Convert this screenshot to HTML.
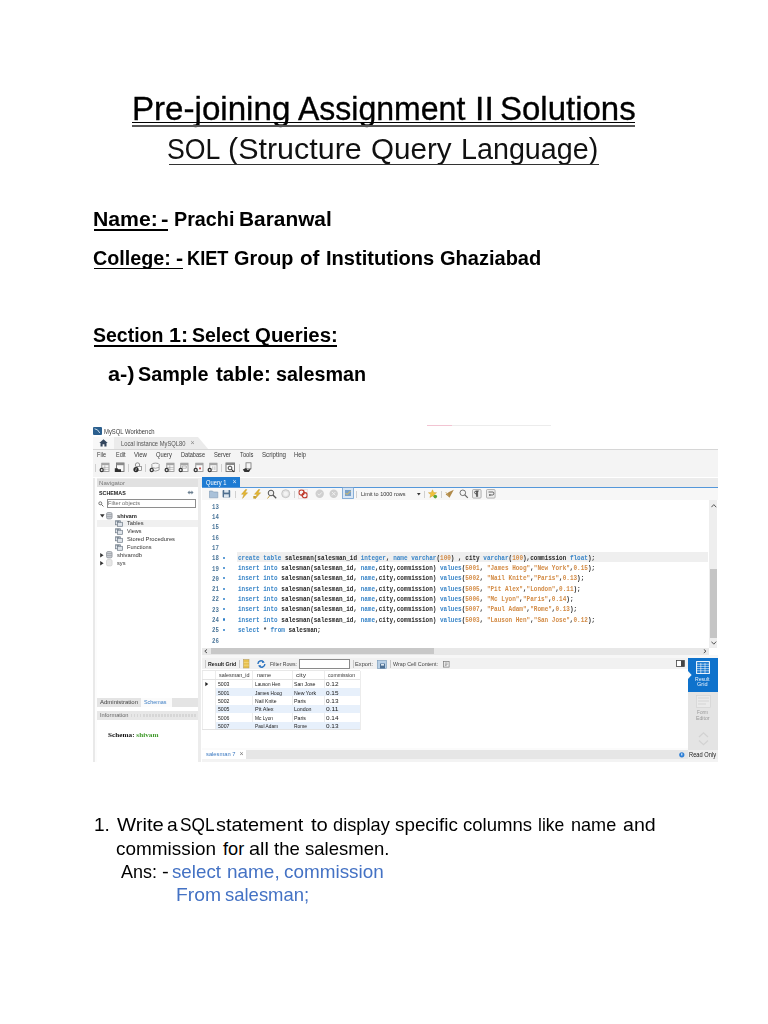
<!DOCTYPE html>
<html><head><meta charset="utf-8"><title>Pre-joining Assignment II Solutions</title>
<style>
html,body{margin:0;padding:0;background:#fff;}
body{width:768px;height:1024px;position:relative;overflow:hidden;font-family:"Liberation Sans",sans-serif;}
.k{color:#3a86c8;}
.o{color:#d38b45;}
</style></head><body>
<div style="position:absolute;left:131.96px;top:92.60px;font-family:'Liberation Sans',sans-serif;font-size:32.70px;font-weight:normal;color:#000;line-height:1;white-space:nowrap;transform-origin:0 0;transform:scaleX(1.0132);-webkit-text-stroke:0.35px #000;">Pre-joining</div>
<div style="position:absolute;left:298.40px;top:92.60px;font-family:'Liberation Sans',sans-serif;font-size:32.70px;font-weight:normal;color:#000;line-height:1;white-space:nowrap;transform-origin:0 0;transform:scaleX(0.9795);-webkit-text-stroke:0.35px #000;">Assignment</div>
<div style="position:absolute;left:475.10px;top:92.60px;font-family:'Liberation Sans',sans-serif;font-size:32.70px;font-weight:normal;color:#000;line-height:1;white-space:nowrap;transform-origin:0 0;transform:scaleX(1.0333);-webkit-text-stroke:0.35px #000;">II</div>
<div style="position:absolute;left:499.68px;top:92.60px;font-family:'Liberation Sans',sans-serif;font-size:32.70px;font-weight:normal;color:#000;line-height:1;white-space:nowrap;transform-origin:0 0;transform:scaleX(1.0092);-webkit-text-stroke:0.35px #000;">Solutions</div>
<div style="position:absolute;left:132.20px;top:121.80px;width:502.60px;height:1.20px;background:#000;"></div>
<div style="position:absolute;left:132.20px;top:124.90px;width:502.60px;height:2.00px;background:#555;"></div>
<div style="position:absolute;left:167.09px;top:133.80px;font-family:'Liberation Sans',sans-serif;font-size:29.50px;font-weight:normal;color:#111;line-height:1;white-space:nowrap;transform-origin:0 0;transform:scaleX(0.9036);">SOL</div>
<div style="position:absolute;left:228.13px;top:133.80px;font-family:'Liberation Sans',sans-serif;font-size:29.50px;font-weight:normal;color:#111;line-height:1;white-space:nowrap;transform-origin:0 0;transform:scaleX(1.0325);">(Structure</div>
<div style="position:absolute;left:371.20px;top:133.80px;font-family:'Liberation Sans',sans-serif;font-size:29.50px;font-weight:normal;color:#111;line-height:1;white-space:nowrap;transform-origin:0 0;transform:scaleX(1.0038);">Query</div>
<div style="position:absolute;left:461.45px;top:133.80px;font-family:'Liberation Sans',sans-serif;font-size:29.50px;font-weight:normal;color:#111;line-height:1;white-space:nowrap;transform-origin:0 0;transform:scaleX(0.9730);">Language)</div>
<div style="position:absolute;left:168.60px;top:163.50px;width:430.90px;height:1.30px;background:#333;"></div>
<div style="position:absolute;left:92.64px;top:209.00px;font-family:'Liberation Sans',sans-serif;font-size:20.00px;font-weight:bold;color:#000;line-height:1;white-space:nowrap;transform-origin:0 0;transform:scaleX(1.0603);">Name:</div>
<div style="position:absolute;left:161.37px;top:209.00px;font-family:'Liberation Sans',sans-serif;font-size:20.00px;font-weight:bold;color:#000;line-height:1;white-space:nowrap;transform-origin:0 0;transform:scaleX(1.1231);">-</div>
<div style="position:absolute;left:173.61px;top:209.00px;font-family:'Liberation Sans',sans-serif;font-size:20.00px;font-weight:bold;color:#000;line-height:1;white-space:nowrap;transform-origin:0 0;transform:scaleX(0.9881);">Prachi</div>
<div style="position:absolute;left:238.56px;top:209.00px;font-family:'Liberation Sans',sans-serif;font-size:20.00px;font-weight:bold;color:#000;line-height:1;white-space:nowrap;transform-origin:0 0;transform:scaleX(1.0430);">Baranwal</div>
<div style="position:absolute;left:93.50px;top:229.40px;width:74.50px;height:1.60px;background:#000;"></div>
<div style="position:absolute;left:92.71px;top:248.00px;font-family:'Liberation Sans',sans-serif;font-size:20.00px;font-weight:bold;color:#000;line-height:1;white-space:nowrap;transform-origin:0 0;transform:scaleX(0.9868);">College:</div>
<div style="position:absolute;left:175.51px;top:248.00px;font-family:'Liberation Sans',sans-serif;font-size:20.00px;font-weight:bold;color:#000;line-height:1;white-space:nowrap;transform-origin:0 0;transform:scaleX(1.0683);">-</div>
<div style="position:absolute;left:187.32px;top:248.00px;font-family:'Liberation Sans',sans-serif;font-size:20.00px;font-weight:bold;color:#000;line-height:1;white-space:nowrap;transform-origin:0 0;transform:scaleX(0.9100);">KIET</div>
<div style="position:absolute;left:234.41px;top:248.00px;font-family:'Liberation Sans',sans-serif;font-size:20.00px;font-weight:bold;color:#000;line-height:1;white-space:nowrap;transform-origin:0 0;transform:scaleX(0.9914);">Group</div>
<div style="position:absolute;left:299.57px;top:248.00px;font-family:'Liberation Sans',sans-serif;font-size:20.00px;font-weight:bold;color:#000;line-height:1;white-space:nowrap;transform-origin:0 0;transform:scaleX(1.0333);">of</div>
<div style="position:absolute;left:325.80px;top:248.00px;font-family:'Liberation Sans',sans-serif;font-size:20.00px;font-weight:bold;color:#000;line-height:1;white-space:nowrap;transform-origin:0 0;transform:scaleX(1.0038);">Institutions</div>
<div style="position:absolute;left:439.90px;top:248.00px;font-family:'Liberation Sans',sans-serif;font-size:20.00px;font-weight:bold;color:#000;line-height:1;white-space:nowrap;transform-origin:0 0;transform:scaleX(1.0010);">Ghaziabad</div>
<div style="position:absolute;left:93.50px;top:267.80px;width:89.00px;height:1.60px;background:#000;"></div>
<div style="position:absolute;left:92.73px;top:325.30px;font-family:'Liberation Sans',sans-serif;font-size:20.00px;font-weight:bold;color:#000;line-height:1;white-space:nowrap;transform-origin:0 0;transform:scaleX(0.9743);">Section</div>
<div style="position:absolute;left:169.33px;top:325.30px;font-family:'Liberation Sans',sans-serif;font-size:20.00px;font-weight:bold;color:#000;line-height:1;white-space:nowrap;transform-origin:0 0;transform:scaleX(1.0733);">1:</div>
<div style="position:absolute;left:192.22px;top:325.30px;font-family:'Liberation Sans',sans-serif;font-size:20.00px;font-weight:bold;color:#000;line-height:1;white-space:nowrap;transform-origin:0 0;transform:scaleX(0.9759);">Select</div>
<div style="position:absolute;left:255.48px;top:325.30px;font-family:'Liberation Sans',sans-serif;font-size:20.00px;font-weight:bold;color:#000;line-height:1;white-space:nowrap;transform-origin:0 0;transform:scaleX(1.0205);">Queries:</div>
<div style="position:absolute;left:93.50px;top:345.20px;width:243.20px;height:1.80px;background:#000;"></div>
<div style="position:absolute;left:107.69px;top:363.50px;font-family:'Liberation Sans',sans-serif;font-size:20.00px;font-weight:bold;color:#000;line-height:1;white-space:nowrap;transform-origin:0 0;transform:scaleX(1.0884);">a-)</div>
<div style="position:absolute;left:138.21px;top:363.50px;font-family:'Liberation Sans',sans-serif;font-size:20.00px;font-weight:bold;color:#000;line-height:1;white-space:nowrap;transform-origin:0 0;transform:scaleX(0.9899);">Sample</div>
<div style="position:absolute;left:215.70px;top:363.50px;font-family:'Liberation Sans',sans-serif;font-size:20.00px;font-weight:bold;color:#000;line-height:1;white-space:nowrap;transform-origin:0 0;transform:scaleX(1.0288);">table:</div>
<div style="position:absolute;left:276.41px;top:363.50px;font-family:'Liberation Sans',sans-serif;font-size:20.00px;font-weight:bold;color:#000;line-height:1;white-space:nowrap;transform-origin:0 0;transform:scaleX(0.9876);">salesman</div>
<div style="position:absolute;left:93.55px;top:816.00px;font-family:'Liberation Sans',sans-serif;font-size:18.20px;font-weight:normal;color:#000;line-height:1;white-space:nowrap;transform-origin:0 0;transform:scaleX(1.0500);">1.</div>
<div style="position:absolute;left:117.30px;top:816.00px;font-family:'Liberation Sans',sans-serif;font-size:18.20px;font-weight:normal;color:#000;line-height:1;white-space:nowrap;transform-origin:0 0;transform:scaleX(1.1122);">Write</div>
<div style="position:absolute;left:167.24px;top:816.00px;font-family:'Liberation Sans',sans-serif;font-size:18.20px;font-weight:normal;color:#000;line-height:1;white-space:nowrap;transform-origin:0 0;transform:scaleX(1.0556);">a</div>
<div style="position:absolute;left:179.97px;top:816.00px;font-family:'Liberation Sans',sans-serif;font-size:18.20px;font-weight:normal;color:#000;line-height:1;white-space:nowrap;transform-origin:0 0;transform:scaleX(0.9478);">SQL</div>
<div style="position:absolute;left:216.41px;top:816.00px;font-family:'Liberation Sans',sans-serif;font-size:18.20px;font-weight:normal;color:#000;line-height:1;white-space:nowrap;transform-origin:0 0;transform:scaleX(1.0924);">statement</div>
<div style="position:absolute;left:310.61px;top:816.00px;font-family:'Liberation Sans',sans-serif;font-size:18.20px;font-weight:normal;color:#000;line-height:1;white-space:nowrap;transform-origin:0 0;transform:scaleX(1.1127);">to</div>
<div style="position:absolute;left:332.90px;top:816.00px;font-family:'Liberation Sans',sans-serif;font-size:18.20px;font-weight:normal;color:#000;line-height:1;white-space:nowrap;transform-origin:0 0;transform:scaleX(1.0036);">display</div>
<div style="position:absolute;left:395.36px;top:816.00px;font-family:'Liberation Sans',sans-serif;font-size:18.20px;font-weight:normal;color:#000;line-height:1;white-space:nowrap;transform-origin:0 0;transform:scaleX(1.0356);">specific</div>
<div style="position:absolute;left:462.88px;top:816.00px;font-family:'Liberation Sans',sans-serif;font-size:18.20px;font-weight:normal;color:#000;line-height:1;white-space:nowrap;transform-origin:0 0;transform:scaleX(1.0205);">columns</div>
<div style="position:absolute;left:537.54px;top:816.00px;font-family:'Liberation Sans',sans-serif;font-size:18.20px;font-weight:normal;color:#000;line-height:1;white-space:nowrap;transform-origin:0 0;transform:scaleX(0.9615);">like</div>
<div style="position:absolute;left:570.91px;top:816.00px;font-family:'Liberation Sans',sans-serif;font-size:18.20px;font-weight:normal;color:#000;line-height:1;white-space:nowrap;transform-origin:0 0;transform:scaleX(0.9932);">name</div>
<div style="position:absolute;left:622.92px;top:816.00px;font-family:'Liberation Sans',sans-serif;font-size:18.20px;font-weight:normal;color:#000;line-height:1;white-space:nowrap;transform-origin:0 0;transform:scaleX(1.0786);">and</div>
<div style="position:absolute;left:115.86px;top:839.70px;font-family:'Liberation Sans',sans-serif;font-size:18.20px;font-weight:normal;color:#000;line-height:1;white-space:nowrap;transform-origin:0 0;transform:scaleX(1.0415);">commission</div>
<div style="position:absolute;left:223.00px;top:839.70px;font-family:'Liberation Sans',sans-serif;font-size:18.20px;font-weight:normal;color:#000;line-height:1;white-space:nowrap;transform-origin:0 0;transform:scaleX(1.0000);">for</div>
<div style="position:absolute;left:248.71px;top:839.70px;font-family:'Liberation Sans',sans-serif;font-size:18.20px;font-weight:normal;color:#000;line-height:1;white-space:nowrap;transform-origin:0 0;transform:scaleX(1.0938);">all</div>
<div style="position:absolute;left:274.20px;top:839.70px;font-family:'Liberation Sans',sans-serif;font-size:18.20px;font-weight:normal;color:#000;line-height:1;white-space:nowrap;transform-origin:0 0;transform:scaleX(1.0160);">the</div>
<div style="position:absolute;left:305.38px;top:839.70px;font-family:'Liberation Sans',sans-serif;font-size:18.20px;font-weight:normal;color:#000;line-height:1;white-space:nowrap;transform-origin:0 0;transform:scaleX(1.0188);">salesmen.</div>
<div style="position:absolute;left:121.40px;top:863.20px;font-family:'Liberation Sans',sans-serif;font-size:18.20px;font-weight:normal;color:#000;line-height:1;white-space:nowrap;transform-origin:0 0;transform:scaleX(0.9886);">Ans:</div>
<div style="position:absolute;left:162.00px;top:863.20px;font-family:'Liberation Sans',sans-serif;font-size:18.20px;font-weight:normal;color:#000;line-height:1;white-space:nowrap;transform-origin:0 0;transform:scaleX(1.1171);">-</div>
<div style="position:absolute;left:172.37px;top:863.20px;font-family:'Liberation Sans',sans-serif;font-size:18.20px;font-weight:normal;color:#4472c4;line-height:1;white-space:nowrap;transform-origin:0 0;transform:scaleX(1.0304);">select</div>
<div style="position:absolute;left:226.76px;top:863.20px;font-family:'Liberation Sans',sans-serif;font-size:18.20px;font-weight:normal;color:#4472c4;line-height:1;white-space:nowrap;transform-origin:0 0;transform:scaleX(1.0417);">name,</div>
<div style="position:absolute;left:283.96px;top:863.20px;font-family:'Liberation Sans',sans-serif;font-size:18.20px;font-weight:normal;color:#4472c4;line-height:1;white-space:nowrap;transform-origin:0 0;transform:scaleX(1.0394);">commission</div>
<div style="position:absolute;left:175.68px;top:886.20px;font-family:'Liberation Sans',sans-serif;font-size:18.20px;font-weight:normal;color:#4472c4;line-height:1;white-space:nowrap;transform-origin:0 0;transform:scaleX(1.0615);">From</div>
<div style="position:absolute;left:225.23px;top:886.20px;font-family:'Liberation Sans',sans-serif;font-size:18.20px;font-weight:normal;color:#4472c4;line-height:1;white-space:nowrap;transform-origin:0 0;transform:scaleX(1.0156);">salesman;</div>
<div style="position:absolute;left:0;top:0;width:768px;height:1024px;filter:blur(0.25px);">
<div style="position:absolute;left:93.00px;top:423.00px;width:625.00px;height:339.00px;background:#ffffff;"></div>
<div style="position:absolute;left:93.30px;top:427.30px;width:8.40px;height:7.30px;background:#2b5f8e;border-radius:1px;"></div>
<svg style="position:absolute;left:93.30px;top:427.30px;" width="8.4" height="7.3" viewBox="0 0 8.4 7.3"><path d="M1.6 1.8 Q5 2 6.8 6" stroke="#d5e5f3" stroke-width="0.9" fill="none"/></svg>
<div style="position:absolute;left:104.00px;top:428.65px;font-family:'Liberation Sans',sans-serif;font-size:6.80px;font-weight:normal;color:#3c3c3c;line-height:1;white-space:nowrap;transform-origin:0 0;transform:scaleX(0.8640);">MySQL Workbench</div>
<div style="position:absolute;left:427.00px;top:425.20px;width:25.00px;height:0.80px;background:#f2c4d2;"></div>
<div style="position:absolute;left:452.00px;top:425.20px;width:99.00px;height:0.80px;background:#ececec;"></div>
<div style="position:absolute;left:93.00px;top:437.00px;width:21.00px;height:12.50px;background:#f8f8f8;"></div>
<svg style="position:absolute;left:99.00px;top:439.30px;" width="9" height="8" viewBox="0 0 9 8"><path d="M0.3 4 L4.5 0.3 L8.7 4 L7.5 4 L7.5 7.6 L5.4 7.6 L5.4 5.3 L3.6 5.3 L3.6 7.6 L1.5 7.6 L1.5 4 Z" fill="#34475e"/></svg>
<svg style="position:absolute;left:114.00px;top:437.00px;" width="96" height="13" viewBox="0 0 96 13"><path d="M0 0 L84 0 L94.5 12.5 L0 12.5 Z" fill="#ebebeb"/></svg>
<div style="position:absolute;left:120.80px;top:440.66px;font-family:'Liberation Sans',sans-serif;font-size:6.40px;font-weight:normal;color:#555;line-height:1;white-space:nowrap;transform-origin:0 0;transform:scaleX(0.9079);">Local instance MySQL80</div>
<div style="position:absolute;left:190.50px;top:439.26px;font-family:'Liberation Sans',sans-serif;font-size:7.00px;font-weight:normal;color:#888;line-height:1;white-space:nowrap;transform-origin:0 0;">×</div>
<div style="position:absolute;left:93.00px;top:449.30px;width:625.00px;height:0.80px;background:#d6d6d6;"></div>
<div style="position:absolute;left:93.00px;top:450.10px;width:625.00px;height:27.40px;background:#f4f4f4;"></div>
<div style="position:absolute;left:97.00px;top:452.26px;font-family:'Liberation Sans',sans-serif;font-size:6.40px;font-weight:normal;color:#3a3a3a;line-height:1;white-space:nowrap;transform-origin:0 0;transform:scaleX(0.8727);">File</div>
<div style="position:absolute;left:115.50px;top:452.26px;font-family:'Liberation Sans',sans-serif;font-size:6.40px;font-weight:normal;color:#3a3a3a;line-height:1;white-space:nowrap;transform-origin:0 0;transform:scaleX(0.8624);">Edit</div>
<div style="position:absolute;left:134.00px;top:452.26px;font-family:'Liberation Sans',sans-serif;font-size:6.40px;font-weight:normal;color:#3a3a3a;line-height:1;white-space:nowrap;transform-origin:0 0;transform:scaleX(0.9455);">View</div>
<div style="position:absolute;left:155.70px;top:452.26px;font-family:'Liberation Sans',sans-serif;font-size:6.40px;font-weight:normal;color:#3a3a3a;line-height:1;white-space:nowrap;transform-origin:0 0;transform:scaleX(0.9077);">Query</div>
<div style="position:absolute;left:180.50px;top:452.26px;font-family:'Liberation Sans',sans-serif;font-size:6.40px;font-weight:normal;color:#3a3a3a;line-height:1;white-space:nowrap;transform-origin:0 0;transform:scaleX(0.8772);">Database</div>
<div style="position:absolute;left:213.50px;top:452.26px;font-family:'Liberation Sans',sans-serif;font-size:6.40px;font-weight:normal;color:#3a3a3a;line-height:1;white-space:nowrap;transform-origin:0 0;transform:scaleX(0.9029);">Server</div>
<div style="position:absolute;left:240.00px;top:452.26px;font-family:'Liberation Sans',sans-serif;font-size:6.40px;font-weight:normal;color:#3a3a3a;line-height:1;white-space:nowrap;transform-origin:0 0;transform:scaleX(0.9047);">Tools</div>
<div style="position:absolute;left:262.00px;top:452.26px;font-family:'Liberation Sans',sans-serif;font-size:6.40px;font-weight:normal;color:#3a3a3a;line-height:1;white-space:nowrap;transform-origin:0 0;transform:scaleX(0.9648);">Scripting</div>
<div style="position:absolute;left:294.00px;top:452.26px;font-family:'Liberation Sans',sans-serif;font-size:6.40px;font-weight:normal;color:#3a3a3a;line-height:1;white-space:nowrap;transform-origin:0 0;transform:scaleX(0.9121);">Help</div>
<svg style="position:absolute;left:99.30px;top:462.20px;" width="11" height="11" viewBox="0 0 11 11"><rect x="2.8" y="1.2" width="7.2" height="8.2" fill="#fbfbfb" stroke="#8c8c8c" stroke-width="0.8"/><rect x="2.8" y="1.2" width="7.2" height="2" fill="#a5a5a5"/><path d="M5.8 3.4 V9.2 M3 5.4 H9.8 M3 7.3 H9.8" stroke="#9a9a9a" stroke-width="0.6"/><circle cx="2.7" cy="8" r="2.2" fill="#3a3a3a"/><circle cx="2.7" cy="8" r="0.9" fill="#eeeeee"/></svg>
<svg style="position:absolute;left:113.80px;top:462.20px;" width="11" height="11" viewBox="0 0 11 11"><rect x="2.5" y="1" width="7.5" height="8.5" fill="#fafafa" stroke="#6a6a6a" stroke-width="0.9"/><rect x="2.5" y="1" width="7.5" height="2.2" fill="#8a8a8a"/><path d="M0.8 6.3 H3.5 L4.3 7.2 H7 V10 H0.8 Z" fill="#2f2f2f"/></svg>
<div style="position:absolute;left:128.30px;top:463.50px;width:0.60px;height:8.00px;background:#cfcfcf;"></div>
<div style="position:absolute;left:94.80px;top:463.50px;width:0.60px;height:8.00px;background:#cfcfcf;"></div>
<svg style="position:absolute;left:131.80px;top:462.20px;" width="11" height="11" viewBox="0 0 11 11"><circle cx="5.5" cy="3" r="2.2" fill="#f4f4f4" stroke="#777" stroke-width="0.8"/><rect x="5" y="4.5" width="4.5" height="4" fill="#fafafa" stroke="#777" stroke-width="0.7"/><circle cx="4" cy="7.6" r="2.6" fill="#2a2a2a"/><path d="M4.3 6 L3.6 9" stroke="#eee" stroke-width="0.7"/></svg>
<div style="position:absolute;left:145.10px;top:463.50px;width:0.60px;height:8.00px;background:#cfcfcf;"></div>
<svg style="position:absolute;left:148.60px;top:462.20px;" width="11" height="11" viewBox="0 0 11 11"><ellipse cx="6.5" cy="2.6" rx="3.6" ry="1.5" fill="#f6f6f6" stroke="#8c8c8c" stroke-width="0.8"/><path d="M2.9 2.6 V8 Q6.5 10.2 10.1 8 V2.6" fill="#f6f6f6" stroke="#8c8c8c" stroke-width="0.8"/><path d="M2.9 5.3 Q6.5 7.3 10.1 5.3" stroke="#8c8c8c" stroke-width="0.7" fill="none"/><circle cx="2.7" cy="8" r="2.2" fill="#3a3a3a"/><circle cx="2.7" cy="8" r="0.9" fill="#eeeeee"/></svg>
<svg style="position:absolute;left:163.50px;top:462.20px;" width="11" height="11" viewBox="0 0 11 11"><rect x="2.8" y="1.2" width="7.2" height="8.2" fill="#fbfbfb" stroke="#8c8c8c" stroke-width="0.8"/><rect x="2.8" y="1.2" width="7.2" height="2" fill="#a5a5a5"/><path d="M5.8 3.4 V9.2 M3 5.4 H9.8 M3 7.3 H9.8" stroke="#9a9a9a" stroke-width="0.6"/><circle cx="2.7" cy="8" r="2.2" fill="#3a3a3a"/><circle cx="2.7" cy="8" r="0.9" fill="#eeeeee"/></svg>
<svg style="position:absolute;left:178.20px;top:462.20px;" width="11" height="11" viewBox="0 0 11 11"><rect x="2.8" y="1.2" width="7.2" height="8.2" fill="#fbfbfb" stroke="#8c8c8c" stroke-width="0.8"/><rect x="2.8" y="1.2" width="7.2" height="2" fill="#a5a5a5"/><path d="M4.3 4 H8.3 V6.2 H4.3 Z" fill="none" stroke="#8a8a8a" stroke-width="0.6"/><circle cx="2.7" cy="8" r="2.2" fill="#3a3a3a"/><circle cx="2.7" cy="8" r="0.9" fill="#eeeeee"/></svg>
<svg style="position:absolute;left:192.50px;top:462.20px;" width="11" height="11" viewBox="0 0 11 11"><rect x="2.8" y="1.2" width="7.2" height="8.2" fill="#fbfbfb" stroke="#8c8c8c" stroke-width="0.8"/><rect x="2.8" y="1.2" width="7.2" height="2" fill="#a5a5a5"/><rect x="6" y="5.5" width="2" height="1.8" fill="#b55"/><circle cx="2.7" cy="8" r="2.2" fill="#3a3a3a"/><circle cx="2.7" cy="8" r="0.9" fill="#eeeeee"/></svg>
<svg style="position:absolute;left:207.00px;top:462.20px;" width="11" height="11" viewBox="0 0 11 11"><rect x="2.8" y="1.2" width="7.2" height="8.2" fill="#fbfbfb" stroke="#8c8c8c" stroke-width="0.8"/><rect x="2.8" y="1.2" width="7.2" height="2" fill="#a5a5a5"/><path d="M5.8 4.3 V8 M7.9 4.3 V8" stroke="#999" stroke-width="0.6"/><circle cx="2.7" cy="8" r="2.2" fill="#3a3a3a"/><circle cx="2.7" cy="8" r="0.9" fill="#eeeeee"/></svg>
<div style="position:absolute;left:221.30px;top:463.50px;width:0.60px;height:8.00px;background:#cfcfcf;"></div>
<svg style="position:absolute;left:225.00px;top:462.20px;" width="11" height="11" viewBox="0 0 11 11"><rect x="1" y="1" width="8.5" height="8.5" fill="#fafafa" stroke="#6a6a6a" stroke-width="0.9"/><rect x="1" y="1" width="8.5" height="2" fill="#8a8a8a"/><circle cx="5" cy="6" r="1.9" fill="none" stroke="#333" stroke-width="0.9"/><path d="M6.4 7.4 L9 9.8" stroke="#333" stroke-width="1.1"/></svg>
<div style="position:absolute;left:238.50px;top:463.50px;width:0.60px;height:8.00px;background:#cfcfcf;"></div>
<svg style="position:absolute;left:242.00px;top:462.20px;" width="11" height="11" viewBox="0 0 11 11"><rect x="4" y="0.8" width="5" height="6" fill="#f4f4f4" stroke="#777" stroke-width="0.8"/><path d="M0.8 7.5 L4 6 L5.5 8 L9 6.5 L7 10 L2.5 10 Z" fill="#333"/></svg>
<div style="position:absolute;left:93.00px;top:477.50px;width:625.00px;height:9.50px;background:#ececec;"></div>
<div style="position:absolute;left:93.00px;top:477.50px;width:3.60px;height:284.50px;background:#fcfcfc;"></div>
<div style="position:absolute;left:93.00px;top:477.50px;width:2.20px;height:284.50px;background:#e9e9e9;"></div>
<div style="position:absolute;left:96.60px;top:479.40px;width:101.00px;height:7.50px;background:#e1e1e1;"></div>
<div style="position:absolute;left:99.20px;top:479.60px;font-family:'Liberation Sans',sans-serif;font-size:6.00px;font-weight:normal;color:#777;line-height:1;white-space:nowrap;transform-origin:0 0;transform:scaleX(1.0122);">Navigator</div>
<div style="position:absolute;left:197.60px;top:477.50px;width:3.90px;height:284.50px;background:#ececec;"></div>
<div style="position:absolute;left:202.00px;top:477.40px;width:37.70px;height:9.80px;background:#1d7bd3;"></div>
<div style="position:absolute;left:206.00px;top:478.66px;font-family:'Liberation Sans',sans-serif;font-size:7.00px;font-weight:normal;color:#fff;line-height:1;white-space:nowrap;transform-origin:0 0;transform:scaleX(0.8231);">Query 1</div>
<div style="position:absolute;left:232.50px;top:478.26px;font-family:'Liberation Sans',sans-serif;font-size:7.00px;font-weight:normal;color:#d5e6f8;line-height:1;white-space:nowrap;transform-origin:0 0;">×</div>
<div style="position:absolute;left:201.50px;top:487.00px;width:516.50px;height:1.40px;background:#5497da;"></div>
<div style="position:absolute;left:96.50px;top:486.90px;width:101.10px;height:275.10px;background:#ffffff;"></div>
<div style="position:absolute;left:99.00px;top:489.90px;font-family:'Liberation Sans',sans-serif;font-size:6.20px;font-weight:bold;color:#222;line-height:1;white-space:nowrap;transform-origin:0 0;transform:scaleX(0.8626);">SCHEMAS</div>
<svg style="position:absolute;left:186.50px;top:490.30px;" width="7" height="5" viewBox="0 0 7 5"><path d="M0.5 2.5 L2.5 0.5 L2.5 1.7 L4.5 1.7 L4.5 0.5 L6.5 2.5 L4.5 4.5 L4.5 3.3 L2.5 3.3 L2.5 4.5 Z" fill="#6b7f90"/></svg>
<svg style="position:absolute;left:98.20px;top:500.60px;" width="6" height="6" viewBox="0 0 6 6"><circle cx="2.3" cy="2.3" r="1.5" fill="none" stroke="#666" stroke-width="0.9"/><path d="M3.4 3.4 L5.4 5.4" stroke="#666" stroke-width="1"/></svg>
<div style="position:absolute;left:106.60px;top:498.90px;width:89.30px;height:9.50px;background:#fff;box-sizing:border-box;border:0.8px solid #8e8e8e;"></div>
<div style="position:absolute;left:108.40px;top:500.40px;font-family:'Liberation Sans',sans-serif;font-size:6.00px;font-weight:normal;color:#6d6d6d;line-height:1;white-space:nowrap;transform-origin:0 0;transform:scaleX(0.9407);">Filter objects</div>
<svg style="position:absolute;left:99.60px;top:514.00px;" width="5" height="4" viewBox="0 0 5 4"><path d="M0 0.2 H4.6 L2.3 3.4 Z" fill="#333"/></svg>
<svg style="position:absolute;left:106.20px;top:511.60px;" width="7" height="8" viewBox="0 0 7 8"><rect x="0.5" y="0.5" width="5.6" height="6.4" rx="1.5" fill="#c9cdd3" stroke="#8a8f96" stroke-width="0.7"/><path d="M0.8 2.6 H5.8 M0.8 4.6 H5.8" stroke="#8a8f96" stroke-width="0.6"/></svg>
<div style="position:absolute;left:116.50px;top:512.50px;font-family:'Liberation Sans',sans-serif;font-size:6.20px;font-weight:bold;color:#1e1e1e;line-height:1;white-space:nowrap;transform-origin:0 0;transform:scaleX(0.9377);">shivam</div>
<div style="position:absolute;left:96.60px;top:520.30px;width:101.00px;height:6.30px;background:#f0f0f0;"></div>
<svg style="position:absolute;left:114.80px;top:519.90px;" width="9" height="7.5" viewBox="0 0 9 7.5"><rect x="0.5" y="0.8" width="5" height="4" fill="#dfe4ea" stroke="#6f7b88" stroke-width="0.7"/><rect x="2.5" y="2.3" width="5" height="4" fill="#dfe4ea" stroke="#6f7b88" stroke-width="0.7"/><rect x="1.5" y="0.8" width="3" height="1" fill="#6f7b88"/></svg>
<div style="position:absolute;left:126.50px;top:520.00px;font-family:'Liberation Sans',sans-serif;font-size:6.00px;font-weight:normal;color:#333;line-height:1;white-space:nowrap;transform-origin:0 0;transform:scaleX(0.9514);">Tables</div>
<svg style="position:absolute;left:114.80px;top:527.83px;" width="9" height="7.5" viewBox="0 0 9 7.5"><rect x="0.5" y="0.8" width="5" height="4" fill="#dfe4ea" stroke="#6f7b88" stroke-width="0.7"/><rect x="2.5" y="2.3" width="5" height="4" fill="#dfe4ea" stroke="#6f7b88" stroke-width="0.7"/><rect x="1.5" y="0.8" width="3" height="1" fill="#6f7b88"/></svg>
<div style="position:absolute;left:126.50px;top:527.93px;font-family:'Liberation Sans',sans-serif;font-size:6.00px;font-weight:normal;color:#333;line-height:1;white-space:nowrap;transform-origin:0 0;transform:scaleX(0.9116);">Views</div>
<svg style="position:absolute;left:114.80px;top:535.76px;" width="9" height="7.5" viewBox="0 0 9 7.5"><rect x="0.5" y="0.8" width="5" height="4" fill="#dfe4ea" stroke="#6f7b88" stroke-width="0.7"/><rect x="2.5" y="2.3" width="5" height="4" fill="#dfe4ea" stroke="#6f7b88" stroke-width="0.7"/><rect x="1.5" y="0.8" width="3" height="1" fill="#6f7b88"/></svg>
<div style="position:absolute;left:126.50px;top:535.86px;font-family:'Liberation Sans',sans-serif;font-size:6.00px;font-weight:normal;color:#333;line-height:1;white-space:nowrap;transform-origin:0 0;transform:scaleX(0.9594);">Stored Procedures</div>
<svg style="position:absolute;left:114.80px;top:543.69px;" width="9" height="7.5" viewBox="0 0 9 7.5"><rect x="0.5" y="0.8" width="5" height="4" fill="#dfe4ea" stroke="#6f7b88" stroke-width="0.7"/><rect x="2.5" y="2.3" width="5" height="4" fill="#dfe4ea" stroke="#6f7b88" stroke-width="0.7"/><rect x="1.5" y="0.8" width="3" height="1" fill="#6f7b88"/></svg>
<div style="position:absolute;left:126.50px;top:543.79px;font-family:'Liberation Sans',sans-serif;font-size:6.00px;font-weight:normal;color:#333;line-height:1;white-space:nowrap;transform-origin:0 0;transform:scaleX(0.9417);">Functions</div>
<svg style="position:absolute;left:99.80px;top:553.00px;" width="4" height="5" viewBox="0 0 4 5"><path d="M0.2 0 V4.6 L3.6 2.3 Z" fill="#333"/></svg>
<svg style="position:absolute;left:106.20px;top:551.20px;" width="7" height="8" viewBox="0 0 7 8"><rect x="0.5" y="0.5" width="5.6" height="6.4" rx="1.5" fill="#c9cdd3" stroke="#8a8f96" stroke-width="0.7"/><path d="M0.8 2.6 H5.8 M0.8 4.6 H5.8" stroke="#8a8f96" stroke-width="0.6"/></svg>
<div style="position:absolute;left:116.50px;top:551.69px;font-family:'Liberation Sans',sans-serif;font-size:6.20px;font-weight:normal;color:#333;line-height:1;white-space:nowrap;transform-origin:0 0;transform:scaleX(0.9440);">shivamdb</div>
<svg style="position:absolute;left:99.80px;top:561.00px;" width="4" height="5" viewBox="0 0 4 5"><path d="M0.2 0 V4.6 L3.6 2.3 Z" fill="#333"/></svg>
<svg style="position:absolute;left:106.20px;top:559.20px;" width="7" height="8" viewBox="0 0 7 8"><rect x="0.5" y="0.5" width="5.6" height="6.4" rx="1.5" fill="#e6e6e6" stroke="#d0d0d0" stroke-width="0.7"/></svg>
<div style="position:absolute;left:116.50px;top:559.69px;font-family:'Liberation Sans',sans-serif;font-size:6.20px;font-weight:normal;color:#333;line-height:1;white-space:nowrap;transform-origin:0 0;transform:scaleX(0.9158);">sys</div>
<div style="position:absolute;left:96.60px;top:698.00px;width:101.00px;height:8.90px;background:#e4e4e4;"></div>
<div style="position:absolute;left:141.00px;top:698.00px;width:31.00px;height:8.90px;background:#fbfbfb;"></div>
<div style="position:absolute;left:99.80px;top:700.10px;font-family:'Liberation Sans',sans-serif;font-size:5.80px;font-weight:normal;color:#444;line-height:1;white-space:nowrap;transform-origin:0 0;transform:scaleX(1.0345);">Administration</div>
<div style="position:absolute;left:144.00px;top:700.10px;font-family:'Liberation Sans',sans-serif;font-size:5.80px;font-weight:normal;color:#3b7dc4;line-height:1;white-space:nowrap;transform-origin:0 0;transform:scaleX(0.9308);">Schemas</div>
<div style="position:absolute;left:96.60px;top:710.50px;width:101.00px;height:9.30px;background:#e7e7e7;"></div>
<div style="position:absolute;left:99.80px;top:711.70px;font-family:'Liberation Sans',sans-serif;font-size:6.00px;font-weight:normal;color:#666;line-height:1;white-space:nowrap;transform-origin:0 0;transform:scaleX(0.9495);">Information</div>
<div style="position:absolute;left:131.00px;top:714.00px;width:65.00px;height:2.60px;background:repeating-linear-gradient(90deg,#d6d6d6 0 0.7px,transparent 0.7px 1.5px);"></div>
<div style="position:absolute;left:107.70px;top:732.10px;font-family:'Liberation Serif',serif;font-size:6.60px;font-weight:bold;color:#111;line-height:1;white-space:nowrap;transform-origin:0 0;transform:scaleX(1.0982);">Schema: <span style="color:#3f9a2a">shivam</span></div>
<div style="position:absolute;left:201.50px;top:488.40px;width:516.50px;height:11.60px;background:#f7f7f7;"></div>
<svg style="position:absolute;left:208.60px;top:489.20px;" width="10" height="10" viewBox="0 0 10 10"><path d="M0.5 2 H3.5 L4.5 3 H8.8 V8.8 H0.5 Z" fill="#a9c1d9" stroke="#7d98b3" stroke-width="0.6"/></svg>
<svg style="position:absolute;left:222.30px;top:489.20px;" width="10" height="10" viewBox="0 0 10 10"><rect x="0.6" y="1" width="7.6" height="7.6" rx="0.8" fill="#4e6e8e"/><rect x="2.2" y="1" width="4.4" height="2.6" fill="#dde6ee"/><rect x="2" y="5.3" width="4.8" height="3.3" fill="#dde6ee"/></svg>
<div style="position:absolute;left:235.00px;top:490.50px;width:0.60px;height:7.50px;background:#d0d0d0;"></div>
<svg style="position:absolute;left:239.50px;top:489.20px;" width="10" height="10" viewBox="0 0 10 10"><path d="M5.5 0.6 L1.5 5.3 H4 L2.5 9.4 L7.6 3.8 H5 L6.8 0.6 Z" fill="#e6b832" stroke="#b98c1a" stroke-width="0.4"/></svg>
<svg style="position:absolute;left:253.30px;top:489.20px;" width="10" height="10" viewBox="0 0 10 10"><path d="M5.5 0.6 L1.5 5.3 H4 L2.5 9.4 L7.6 3.8 H5 L6.8 0.6 Z" fill="#e6b832" stroke="#b98c1a" stroke-width="0.4"/><rect x="0.3" y="7" width="2.6" height="2.6" fill="#c6a030"/></svg>
<svg style="position:absolute;left:266.50px;top:489.20px;" width="10" height="10" viewBox="0 0 10 10"><circle cx="4" cy="4" r="2.8" fill="#eee" stroke="#555" stroke-width="1"/><path d="M6 6 L9.2 9.2" stroke="#555" stroke-width="1.3"/><path d="M0.5 9.5 L2.5 7" stroke="#c8a23a" stroke-width="1"/></svg>
<svg style="position:absolute;left:280.80px;top:489.20px;" width="10" height="10" viewBox="0 0 10 10"><circle cx="4.7" cy="4.7" r="4" fill="#e3e3e3" stroke="#bdbdbd" stroke-width="0.8"/><circle cx="4.7" cy="4.7" r="2.2" fill="#f3f3f3"/></svg>
<div style="position:absolute;left:293.50px;top:490.50px;width:0.60px;height:7.50px;background:#d0d0d0;"></div>
<svg style="position:absolute;left:297.60px;top:489.20px;" width="10" height="10" viewBox="0 0 10 10"><circle cx="3.5" cy="3.5" r="2.6" fill="none" stroke="#c0392b" stroke-width="1.3"/><circle cx="6.7" cy="6.3" r="2.6" fill="none" stroke="#c0392b" stroke-width="1.3"/><rect x="0.3" y="0.3" width="9.4" height="9.4" fill="none" stroke="#e3d0d0" stroke-width="0.5"/></svg>
<svg style="position:absolute;left:315.20px;top:489.20px;" width="10" height="10" viewBox="0 0 10 10"><circle cx="4.7" cy="4.7" r="4.2" fill="#cfcfcf"/><path d="M2.7 4.8 L4.2 6.2 L6.8 3.4" stroke="#f2f2f2" stroke-width="0.9" fill="none"/></svg>
<svg style="position:absolute;left:329.00px;top:489.20px;" width="10" height="10" viewBox="0 0 10 10"><circle cx="4.7" cy="4.7" r="4.2" fill="#cfcfcf"/><path d="M3 3 L6.4 6.4 M6.4 3 L3 6.4" stroke="#f2f2f2" stroke-width="0.9"/></svg>
<svg style="position:absolute;left:341.70px;top:486.80px;" width="12" height="12" viewBox="0 0 12 12"><rect x="0.5" y="0.5" width="11" height="11" fill="#d8e6f4" stroke="#6f9fd0" stroke-width="0.8"/><rect x="3" y="3" width="6" height="6" fill="#7aa0c8"/><path d="M3.5 6 L5 7.5 L8.5 4" stroke="#e8c050" stroke-width="1" fill="none"/></svg>
<div style="position:absolute;left:356.00px;top:490.50px;width:0.60px;height:7.50px;background:#d0d0d0;"></div>
<div style="position:absolute;left:360.80px;top:490.70px;font-family:'Liberation Sans',sans-serif;font-size:6.00px;font-weight:normal;color:#333;line-height:1;white-space:nowrap;transform-origin:0 0;transform:scaleX(0.9137);">Limit to 1000 rows</div>
<svg style="position:absolute;left:416.50px;top:492.60px;" width="4" height="3" viewBox="0 0 4 3"><path d="M0 0 H3.6 L1.8 2.4 Z" fill="#333"/></svg>
<div style="position:absolute;left:424.00px;top:490.50px;width:0.60px;height:7.50px;background:#d0d0d0;"></div>
<svg style="position:absolute;left:427.80px;top:489.20px;" width="10" height="10" viewBox="0 0 10 10"><path d="M4.5 0.8 L5.7 3.5 L8.6 3.7 L6.3 5.6 L7.1 8.5 L4.5 6.9 L1.9 8.5 L2.7 5.6 L0.4 3.7 L3.3 3.5 Z" fill="#f0c23b" stroke="#c4962a" stroke-width="0.4"/><circle cx="7.3" cy="7.6" r="1.8" fill="#5aa33a"/></svg>
<div style="position:absolute;left:441.00px;top:490.50px;width:0.60px;height:7.50px;background:#d0d0d0;"></div>
<svg style="position:absolute;left:445.00px;top:489.20px;" width="10" height="10" viewBox="0 0 10 10"><path d="M0.6 5.5 L4 3 L8.8 0.8 L6.5 5 L4.5 8.8 L2.5 6.8 Z" fill="#b08a4a"/><path d="M0.6 3 L3.5 6.5" stroke="#c9a86a" stroke-width="0.8"/></svg>
<svg style="position:absolute;left:458.80px;top:489.20px;" width="10" height="10" viewBox="0 0 10 10"><circle cx="3.8" cy="3.8" r="2.8" fill="none" stroke="#666" stroke-width="0.9"/><path d="M5.8 5.8 L8.8 8.8" stroke="#666" stroke-width="1.2"/></svg>
<svg style="position:absolute;left:472.30px;top:489.20px;" width="10" height="10" viewBox="0 0 10 10"><rect x="0.5" y="0.5" width="8.6" height="8.6" rx="1" fill="#ececec" stroke="#9a9a9a" stroke-width="0.7"/><path d="M4.2 2 H6.8 M5.6 2 V7.8 M4.2 2 Q2.4 2.2 2.6 3.7 Q2.8 5 4.6 5 M4.6 2 V7.8" stroke="#333" stroke-width="0.8" fill="none"/></svg>
<svg style="position:absolute;left:485.80px;top:489.20px;" width="10" height="10" viewBox="0 0 10 10"><rect x="0.5" y="0.5" width="8.6" height="8.6" rx="1" fill="#ececec" stroke="#9a9a9a" stroke-width="0.7"/><path d="M2.5 3 H7 Q7.8 3 7.8 4.5 Q7.8 6 6.5 6 H3.5 M4.3 5 L3.3 6 L4.3 7" stroke="#333" stroke-width="0.7" fill="none"/></svg>
<div style="position:absolute;left:201.50px;top:500.00px;width:507.90px;height:147.60px;background:#ffffff;"></div>
<div style="position:absolute;left:237.20px;top:552.40px;width:470.40px;height:10.00px;background:#efefef;"></div>
<div style="position:absolute;left:709.40px;top:500.00px;width:7.80px;height:147.60px;background:#eeeeee;"></div>
<svg style="position:absolute;left:710.60px;top:503.60px;" width="6" height="4" viewBox="0 0 6 4"><path d="M0.4 3.2 L2.8 0.6 L5.2 3.2" stroke="#555" stroke-width="1" fill="none"/></svg>
<div style="position:absolute;left:709.60px;top:569.00px;width:7.40px;height:68.50px;background:#c5c5c5;"></div>
<svg style="position:absolute;left:710.60px;top:641.20px;" width="6" height="4" viewBox="0 0 6 4"><path d="M0.4 0.6 L2.8 3.2 L5.2 0.6" stroke="#555" stroke-width="1" fill="none"/></svg>
<div style="position:absolute;left:201.50px;top:647.80px;width:507.90px;height:6.80px;background:#e8e8e8;"></div>
<div style="position:absolute;left:211.00px;top:648.10px;width:222.60px;height:6.20px;background:#c8c8c8;"></div>
<svg style="position:absolute;left:204.20px;top:649.30px;" width="4" height="5" viewBox="0 0 4 5"><path d="M3 0.4 L0.8 2.2 L3 4" stroke="#444" stroke-width="0.9" fill="none"/></svg>
<svg style="position:absolute;left:702.60px;top:649.30px;" width="4" height="5" viewBox="0 0 4 5"><path d="M0.8 0.4 L3 2.2 L0.8 4" stroke="#444" stroke-width="0.9" fill="none"/></svg>
<div style="position:absolute;left:201.50px;top:654.60px;width:516.50px;height:3.10px;background:#f7f7f7;"></div>
<div style="position:absolute;left:211.60px;top:504.70px;font-family:'Liberation Mono',monospace;font-size:6.60px;font-weight:normal;color:#4a7599;line-height:1;white-space:nowrap;transform-origin:0 0;transform:scaleX(0.86);font-weight:bold;">13</div>
<div style="position:absolute;left:211.60px;top:515.00px;font-family:'Liberation Mono',monospace;font-size:6.60px;font-weight:normal;color:#4a7599;line-height:1;white-space:nowrap;transform-origin:0 0;transform:scaleX(0.86);font-weight:bold;">14</div>
<div style="position:absolute;left:211.60px;top:525.30px;font-family:'Liberation Mono',monospace;font-size:6.60px;font-weight:normal;color:#4a7599;line-height:1;white-space:nowrap;transform-origin:0 0;transform:scaleX(0.86);font-weight:bold;">15</div>
<div style="position:absolute;left:211.60px;top:535.60px;font-family:'Liberation Mono',monospace;font-size:6.60px;font-weight:normal;color:#4a7599;line-height:1;white-space:nowrap;transform-origin:0 0;transform:scaleX(0.86);font-weight:bold;">16</div>
<div style="position:absolute;left:211.60px;top:545.90px;font-family:'Liberation Mono',monospace;font-size:6.60px;font-weight:normal;color:#4a7599;line-height:1;white-space:nowrap;transform-origin:0 0;transform:scaleX(0.86);font-weight:bold;">17</div>
<div style="position:absolute;left:211.60px;top:556.20px;font-family:'Liberation Mono',monospace;font-size:6.60px;font-weight:normal;color:#4a7599;line-height:1;white-space:nowrap;transform-origin:0 0;transform:scaleX(0.86);font-weight:bold;">18</div>
<div style="position:absolute;left:223.00px;top:556.60px;width:2.20px;height:2.20px;background:#2f7fc9;border-radius:50%;"></div>
<div style="position:absolute;left:238.40px;top:554.76px;font-family:'Liberation Mono',monospace;font-size:6.90px;font-weight:normal;color:#2a2a2a;line-height:1;white-space:nowrap;transform-origin:0 0;transform:scaleX(0.8722);font-weight:bold;"><span class="k">create</span> <span class="k">table</span> salesman(salesman_id <span class="k">integer</span>, <span class="k">name</span> <span class="k">varchar</span>(<span class="o">100</span>) , city <span class="k">varchar</span>(<span class="o">100</span>),commission <span class="k">float</span>);</div>
<div style="position:absolute;left:211.60px;top:566.50px;font-family:'Liberation Mono',monospace;font-size:6.60px;font-weight:normal;color:#4a7599;line-height:1;white-space:nowrap;transform-origin:0 0;transform:scaleX(0.86);font-weight:bold;">19</div>
<div style="position:absolute;left:223.00px;top:566.90px;width:2.20px;height:2.20px;background:#2f7fc9;border-radius:50%;"></div>
<div style="position:absolute;left:238.40px;top:565.06px;font-family:'Liberation Mono',monospace;font-size:6.90px;font-weight:normal;color:#2a2a2a;line-height:1;white-space:nowrap;transform-origin:0 0;transform:scaleX(0.8722);font-weight:bold;"><span class="k">insert</span> <span class="k">into</span> salesman(salesman_id, <span class="k">name</span>,city,commission) <span class="k">values</span>(<span class="o">5001</span>, <span class="o">"James Hoog"</span>,<span class="o">"New York"</span>,<span class="o">0.15</span>);</div>
<div style="position:absolute;left:211.60px;top:576.80px;font-family:'Liberation Mono',monospace;font-size:6.60px;font-weight:normal;color:#4a7599;line-height:1;white-space:nowrap;transform-origin:0 0;transform:scaleX(0.86);font-weight:bold;">20</div>
<div style="position:absolute;left:223.00px;top:577.20px;width:2.20px;height:2.20px;background:#2f7fc9;border-radius:50%;"></div>
<div style="position:absolute;left:238.40px;top:575.36px;font-family:'Liberation Mono',monospace;font-size:6.90px;font-weight:normal;color:#2a2a2a;line-height:1;white-space:nowrap;transform-origin:0 0;transform:scaleX(0.8722);font-weight:bold;"><span class="k">insert</span> <span class="k">into</span> salesman(salesman_id, <span class="k">name</span>,city,commission) <span class="k">values</span>(<span class="o">5002</span>, <span class="o">"Nail Knite"</span>,<span class="o">"Paris"</span>,<span class="o">0.13</span>);</div>
<div style="position:absolute;left:211.60px;top:587.10px;font-family:'Liberation Mono',monospace;font-size:6.60px;font-weight:normal;color:#4a7599;line-height:1;white-space:nowrap;transform-origin:0 0;transform:scaleX(0.86);font-weight:bold;">21</div>
<div style="position:absolute;left:223.00px;top:587.50px;width:2.20px;height:2.20px;background:#2f7fc9;border-radius:50%;"></div>
<div style="position:absolute;left:238.40px;top:585.66px;font-family:'Liberation Mono',monospace;font-size:6.90px;font-weight:normal;color:#2a2a2a;line-height:1;white-space:nowrap;transform-origin:0 0;transform:scaleX(0.8722);font-weight:bold;"><span class="k">insert</span> <span class="k">into</span> salesman(salesman_id, <span class="k">name</span>,city,commission) <span class="k">values</span>(<span class="o">5005</span>, <span class="o">"Pit Alex"</span>,<span class="o">"London"</span>,<span class="o">0.11</span>);</div>
<div style="position:absolute;left:211.60px;top:597.40px;font-family:'Liberation Mono',monospace;font-size:6.60px;font-weight:normal;color:#4a7599;line-height:1;white-space:nowrap;transform-origin:0 0;transform:scaleX(0.86);font-weight:bold;">22</div>
<div style="position:absolute;left:223.00px;top:597.80px;width:2.20px;height:2.20px;background:#2f7fc9;border-radius:50%;"></div>
<div style="position:absolute;left:238.40px;top:595.96px;font-family:'Liberation Mono',monospace;font-size:6.90px;font-weight:normal;color:#2a2a2a;line-height:1;white-space:nowrap;transform-origin:0 0;transform:scaleX(0.8722);font-weight:bold;"><span class="k">insert</span> <span class="k">into</span> salesman(salesman_id, <span class="k">name</span>,city,commission) <span class="k">values</span>(<span class="o">5006</span>, <span class="o">"Mc Lyon"</span>,<span class="o">"Paris"</span>,<span class="o">0.14</span>);</div>
<div style="position:absolute;left:211.60px;top:607.70px;font-family:'Liberation Mono',monospace;font-size:6.60px;font-weight:normal;color:#4a7599;line-height:1;white-space:nowrap;transform-origin:0 0;transform:scaleX(0.86);font-weight:bold;">23</div>
<div style="position:absolute;left:223.00px;top:608.10px;width:2.20px;height:2.20px;background:#2f7fc9;border-radius:50%;"></div>
<div style="position:absolute;left:238.40px;top:606.26px;font-family:'Liberation Mono',monospace;font-size:6.90px;font-weight:normal;color:#2a2a2a;line-height:1;white-space:nowrap;transform-origin:0 0;transform:scaleX(0.8722);font-weight:bold;"><span class="k">insert</span> <span class="k">into</span> salesman(salesman_id, <span class="k">name</span>,city,commission) <span class="k">values</span>(<span class="o">5007</span>, <span class="o">"Paul Adam"</span>,<span class="o">"Rome"</span>,<span class="o">0.13</span>);</div>
<div style="position:absolute;left:211.60px;top:618.00px;font-family:'Liberation Mono',monospace;font-size:6.60px;font-weight:normal;color:#4a7599;line-height:1;white-space:nowrap;transform-origin:0 0;transform:scaleX(0.86);font-weight:bold;">24</div>
<div style="position:absolute;left:223.00px;top:618.40px;width:2.20px;height:2.20px;background:#2f7fc9;border-radius:50%;"></div>
<div style="position:absolute;left:238.40px;top:616.56px;font-family:'Liberation Mono',monospace;font-size:6.90px;font-weight:normal;color:#2a2a2a;line-height:1;white-space:nowrap;transform-origin:0 0;transform:scaleX(0.8722);font-weight:bold;"><span class="k">insert</span> <span class="k">into</span> salesman(salesman_id, <span class="k">name</span>,city,commission) <span class="k">values</span>(<span class="o">5003</span>, <span class="o">"Lauson Hen"</span>,<span class="o">"San Jose"</span>,<span class="o">0.12</span>);</div>
<div style="position:absolute;left:211.60px;top:628.30px;font-family:'Liberation Mono',monospace;font-size:6.60px;font-weight:normal;color:#4a7599;line-height:1;white-space:nowrap;transform-origin:0 0;transform:scaleX(0.86);font-weight:bold;">25</div>
<div style="position:absolute;left:223.00px;top:628.70px;width:2.20px;height:2.20px;background:#2f7fc9;border-radius:50%;"></div>
<div style="position:absolute;left:238.40px;top:626.86px;font-family:'Liberation Mono',monospace;font-size:6.90px;font-weight:normal;color:#2a2a2a;line-height:1;white-space:nowrap;transform-origin:0 0;transform:scaleX(0.8722);font-weight:bold;"><span class="k">select</span> * <span class="k">from</span> salesman;</div>
<div style="position:absolute;left:211.60px;top:638.60px;font-family:'Liberation Mono',monospace;font-size:6.60px;font-weight:normal;color:#4a7599;line-height:1;white-space:nowrap;transform-origin:0 0;transform:scaleX(0.86);font-weight:bold;">26</div>
<div style="position:absolute;left:201.50px;top:657.70px;width:486.50px;height:11.80px;background:#f1f1f1;"></div>
<div style="position:absolute;left:204.50px;top:659.50px;width:0.60px;height:8.50px;background:#c8c8c8;"></div>
<div style="position:absolute;left:207.80px;top:661.90px;font-family:'Liberation Sans',sans-serif;font-size:5.80px;font-weight:bold;color:#222;line-height:1;white-space:nowrap;transform-origin:0 0;transform:scaleX(0.9056);">Result Grid</div>
<div style="position:absolute;left:239.00px;top:659.50px;width:0.60px;height:8.50px;background:#c8c8c8;"></div>
<svg style="position:absolute;left:243.40px;top:659.20px;" width="7" height="10" viewBox="0 0 7 10"><rect x="0.5" y="0.6" width="5.5" height="8.4" fill="#e8c04a" stroke="#b8a060" stroke-width="0.6"/><path d="M0.8 3.4 H5.8 M0.8 6.2 H5.8" stroke="#f7e3a0" stroke-width="0.6"/></svg>
<svg style="position:absolute;left:257.00px;top:660.20px;" width="9" height="8" viewBox="0 0 9 8"><path d="M1 4 A3 3 0 0 1 6.5 2.2" stroke="#2c74c0" stroke-width="1.4" fill="none"/><path d="M7.8 4 A3 3 0 0 1 2.3 5.8" stroke="#2c74c0" stroke-width="1.4" fill="none"/><path d="M5.5 0.3 L7.8 2.6 L5 3" fill="#2c74c0"/><path d="M3.3 7.7 L1 5.4 L3.8 5" fill="#2c74c0"/></svg>
<div style="position:absolute;left:270.30px;top:661.09px;font-family:'Liberation Sans',sans-serif;font-size:6.20px;font-weight:normal;color:#444;line-height:1;white-space:nowrap;transform-origin:0 0;transform:scaleX(0.8264);">Filter Rows:</div>
<div style="position:absolute;left:298.75px;top:659.00px;width:51.55px;height:9.75px;background:#fff;box-sizing:border-box;border:0.8px solid #8a8a8a;"></div>
<div style="position:absolute;left:353.00px;top:659.50px;width:0.60px;height:8.50px;background:#c8c8c8;"></div>
<div style="position:absolute;left:355.20px;top:661.09px;font-family:'Liberation Sans',sans-serif;font-size:6.20px;font-weight:normal;color:#444;line-height:1;white-space:nowrap;transform-origin:0 0;transform:scaleX(0.9179);">Export:</div>
<svg style="position:absolute;left:376.80px;top:659.60px;" width="10" height="9" viewBox="0 0 10 9"><rect x="0.5" y="0.5" width="9" height="8" fill="#b9d0e6" stroke="#7193b5" stroke-width="0.6"/><rect x="3" y="3.5" width="5" height="5" fill="#4c6f93"/><rect x="4" y="4" width="3" height="1.6" fill="#dde6ee"/></svg>
<div style="position:absolute;left:389.80px;top:659.50px;width:0.60px;height:8.50px;background:#c8c8c8;"></div>
<div style="position:absolute;left:392.50px;top:661.09px;font-family:'Liberation Sans',sans-serif;font-size:6.20px;font-weight:normal;color:#444;line-height:1;white-space:nowrap;transform-origin:0 0;transform:scaleX(0.8625);">Wrap Cell Content:</div>
<svg style="position:absolute;left:442.50px;top:660.50px;" width="7" height="7" viewBox="0 0 7 7"><rect x="0.5" y="0.5" width="5.6" height="5.6" fill="#f4f4f4" stroke="#777" stroke-width="0.7"/><path d="M1.8 2 H4.6 M1.8 3.3 H4.6 M1.8 4.6 H3.6" stroke="#555" stroke-width="0.5"/></svg>
<svg style="position:absolute;left:676.00px;top:659.80px;" width="9" height="7" viewBox="0 0 9 7"><rect x="0.5" y="0.5" width="7.8" height="6" fill="#fff" stroke="#444" stroke-width="0.8"/><rect x="5" y="0.5" width="3.3" height="6" fill="#444"/></svg>
<div style="position:absolute;left:201.50px;top:669.50px;width:486.50px;height:78.50px;background:#ffffff;"></div>
<div style="position:absolute;left:202.20px;top:670.50px;width:158.30px;height:9.00px;background:#ffffff;"></div>
<div style="position:absolute;left:201.90px;top:670.50px;width:0.60px;height:59.16px;background:#ececec;"></div>
<div style="position:absolute;left:215.20px;top:670.50px;width:0.60px;height:59.16px;background:#ececec;"></div>
<div style="position:absolute;left:252.40px;top:670.50px;width:0.60px;height:59.16px;background:#ececec;"></div>
<div style="position:absolute;left:292.20px;top:670.50px;width:0.60px;height:59.16px;background:#ececec;"></div>
<div style="position:absolute;left:323.70px;top:670.50px;width:0.60px;height:59.16px;background:#ececec;"></div>
<div style="position:absolute;left:360.20px;top:670.50px;width:0.60px;height:59.16px;background:#ececec;"></div>
<div style="position:absolute;left:202.20px;top:679.20px;width:158.30px;height:0.60px;background:#e3e3e3;"></div>
<div style="position:absolute;left:202.20px;top:670.20px;width:158.30px;height:0.60px;background:#e8e8e8;"></div>
<div style="position:absolute;left:218.50px;top:671.89px;font-family:'Liberation Sans',sans-serif;font-size:6.20px;font-weight:normal;color:#333;line-height:1;white-space:nowrap;transform-origin:0 0;transform:scaleX(0.8777);">salesman_id</div>
<div style="position:absolute;left:257.00px;top:671.89px;font-family:'Liberation Sans',sans-serif;font-size:6.20px;font-weight:normal;color:#333;line-height:1;white-space:nowrap;transform-origin:0 0;transform:scaleX(0.9041);">name</div>
<div style="position:absolute;left:296.00px;top:671.89px;font-family:'Liberation Sans',sans-serif;font-size:6.20px;font-weight:normal;color:#333;line-height:1;white-space:nowrap;transform-origin:0 0;transform:scaleX(1.0774);">city</div>
<div style="position:absolute;left:328.00px;top:671.89px;font-family:'Liberation Sans',sans-serif;font-size:6.20px;font-weight:normal;color:#333;line-height:1;white-space:nowrap;transform-origin:0 0;transform:scaleX(0.8264);">commission</div>
<div style="position:absolute;left:218.20px;top:681.18px;font-family:'Liberation Sans',sans-serif;font-size:6.00px;font-weight:normal;color:#1a1a1a;line-height:1;white-space:nowrap;transform-origin:0 0;transform:scaleX(0.8608);">5003</div>
<div style="position:absolute;left:255.20px;top:681.18px;font-family:'Liberation Sans',sans-serif;font-size:6.00px;font-weight:normal;color:#1a1a1a;line-height:1;white-space:nowrap;transform-origin:0 0;transform:scaleX(0.7880);">Lauson Hen</div>
<div style="position:absolute;left:294.20px;top:681.18px;font-family:'Liberation Sans',sans-serif;font-size:6.00px;font-weight:normal;color:#1a1a1a;line-height:1;white-space:nowrap;transform-origin:0 0;transform:scaleX(0.8589);">San Jose</div>
<div style="position:absolute;left:326.00px;top:681.18px;font-family:'Liberation Sans',sans-serif;font-size:6.00px;font-weight:normal;color:#1a1a1a;line-height:1;white-space:nowrap;transform-origin:0 0;transform:scaleX(1.0695);">0.12</div>
<div style="position:absolute;left:215.80px;top:688.16px;width:144.40px;height:7.76px;background:#e7f0fb;"></div>
<div style="position:absolute;left:218.20px;top:689.54px;font-family:'Liberation Sans',sans-serif;font-size:6.00px;font-weight:normal;color:#1a1a1a;line-height:1;white-space:nowrap;transform-origin:0 0;transform:scaleX(0.8608);">5001</div>
<div style="position:absolute;left:255.20px;top:689.54px;font-family:'Liberation Sans',sans-serif;font-size:6.00px;font-weight:normal;color:#1a1a1a;line-height:1;white-space:nowrap;transform-origin:0 0;transform:scaleX(0.8015);">James Hoog</div>
<div style="position:absolute;left:294.20px;top:689.54px;font-family:'Liberation Sans',sans-serif;font-size:6.00px;font-weight:normal;color:#1a1a1a;line-height:1;white-space:nowrap;transform-origin:0 0;transform:scaleX(0.8675);">New York</div>
<div style="position:absolute;left:326.00px;top:689.54px;font-family:'Liberation Sans',sans-serif;font-size:6.00px;font-weight:normal;color:#1a1a1a;line-height:1;white-space:nowrap;transform-origin:0 0;transform:scaleX(1.0695);">0.15</div>
<div style="position:absolute;left:218.20px;top:697.90px;font-family:'Liberation Sans',sans-serif;font-size:6.00px;font-weight:normal;color:#1a1a1a;line-height:1;white-space:nowrap;transform-origin:0 0;transform:scaleX(0.8608);">5002</div>
<div style="position:absolute;left:255.20px;top:697.90px;font-family:'Liberation Sans',sans-serif;font-size:6.00px;font-weight:normal;color:#1a1a1a;line-height:1;white-space:nowrap;transform-origin:0 0;transform:scaleX(0.8370);">Nail Knite</div>
<div style="position:absolute;left:294.20px;top:697.90px;font-family:'Liberation Sans',sans-serif;font-size:6.00px;font-weight:normal;color:#1a1a1a;line-height:1;white-space:nowrap;transform-origin:0 0;transform:scaleX(0.8777);">Paris</div>
<div style="position:absolute;left:326.00px;top:697.90px;font-family:'Liberation Sans',sans-serif;font-size:6.00px;font-weight:normal;color:#1a1a1a;line-height:1;white-space:nowrap;transform-origin:0 0;transform:scaleX(1.0695);">0.13</div>
<div style="position:absolute;left:215.80px;top:704.88px;width:144.40px;height:7.76px;background:#e7f0fb;"></div>
<div style="position:absolute;left:218.20px;top:706.26px;font-family:'Liberation Sans',sans-serif;font-size:6.00px;font-weight:normal;color:#1a1a1a;line-height:1;white-space:nowrap;transform-origin:0 0;transform:scaleX(0.8608);">5005</div>
<div style="position:absolute;left:255.20px;top:706.26px;font-family:'Liberation Sans',sans-serif;font-size:6.00px;font-weight:normal;color:#1a1a1a;line-height:1;white-space:nowrap;transform-origin:0 0;transform:scaleX(0.9243);">Pit Alex</div>
<div style="position:absolute;left:294.20px;top:706.26px;font-family:'Liberation Sans',sans-serif;font-size:6.00px;font-weight:normal;color:#1a1a1a;line-height:1;white-space:nowrap;transform-origin:0 0;transform:scaleX(0.8736);">London</div>
<div style="position:absolute;left:326.00px;top:706.26px;font-family:'Liberation Sans',sans-serif;font-size:6.00px;font-weight:normal;color:#1a1a1a;line-height:1;white-space:nowrap;transform-origin:0 0;transform:scaleX(1.1127);">0.11</div>
<div style="position:absolute;left:218.20px;top:714.62px;font-family:'Liberation Sans',sans-serif;font-size:6.00px;font-weight:normal;color:#1a1a1a;line-height:1;white-space:nowrap;transform-origin:0 0;transform:scaleX(0.8608);">5006</div>
<div style="position:absolute;left:255.20px;top:714.62px;font-family:'Liberation Sans',sans-serif;font-size:6.00px;font-weight:normal;color:#1a1a1a;line-height:1;white-space:nowrap;transform-origin:0 0;transform:scaleX(0.8017);">Mc Lyon</div>
<div style="position:absolute;left:294.20px;top:714.62px;font-family:'Liberation Sans',sans-serif;font-size:6.00px;font-weight:normal;color:#1a1a1a;line-height:1;white-space:nowrap;transform-origin:0 0;transform:scaleX(0.8777);">Paris</div>
<div style="position:absolute;left:326.00px;top:714.62px;font-family:'Liberation Sans',sans-serif;font-size:6.00px;font-weight:normal;color:#1a1a1a;line-height:1;white-space:nowrap;transform-origin:0 0;transform:scaleX(1.0695);">0.14</div>
<div style="position:absolute;left:215.80px;top:721.60px;width:144.40px;height:7.76px;background:#e7f0fb;"></div>
<div style="position:absolute;left:218.20px;top:722.98px;font-family:'Liberation Sans',sans-serif;font-size:6.00px;font-weight:normal;color:#1a1a1a;line-height:1;white-space:nowrap;transform-origin:0 0;transform:scaleX(0.8608);">5007</div>
<div style="position:absolute;left:255.20px;top:722.98px;font-family:'Liberation Sans',sans-serif;font-size:6.00px;font-weight:normal;color:#1a1a1a;line-height:1;white-space:nowrap;transform-origin:0 0;transform:scaleX(0.7922);">Paul Adam</div>
<div style="position:absolute;left:294.20px;top:722.98px;font-family:'Liberation Sans',sans-serif;font-size:6.00px;font-weight:normal;color:#1a1a1a;line-height:1;white-space:nowrap;transform-origin:0 0;transform:scaleX(0.8117);">Rome</div>
<div style="position:absolute;left:326.00px;top:722.98px;font-family:'Liberation Sans',sans-serif;font-size:6.00px;font-weight:normal;color:#1a1a1a;line-height:1;white-space:nowrap;transform-origin:0 0;transform:scaleX(1.0695);">0.13</div>
<div style="position:absolute;left:202.20px;top:729.36px;width:158.30px;height:0.60px;background:#e3e3e3;"></div>
<svg style="position:absolute;left:205.00px;top:682.20px;" width="4" height="5" viewBox="0 0 4 5"><path d="M0.3 0 V4.2 L3.2 2.1 Z" fill="#222"/></svg>
<div style="position:absolute;left:688.00px;top:657.60px;width:29.50px;height:92.60px;background:#e4e4e4;"></div>
<div style="position:absolute;left:688.00px;top:658.40px;width:29.50px;height:33.20px;background:#0e72cc;"></div>
<svg style="position:absolute;left:688.00px;top:671.00px;" width="4" height="8" viewBox="0 0 4 8"><path d="M0 0 L3.6 4 L0 8 Z" fill="#fafafa"/></svg>
<svg style="position:absolute;left:696.00px;top:661.00px;" width="14" height="13" viewBox="0 0 14 13"><rect x="0.6" y="0.6" width="12.8" height="11.8" fill="none" stroke="#fff" stroke-width="1"/><path d="M0.6 3.2 H13.4 M0.6 5.4 H13.4 M0.6 7.6 H13.4 M0.6 9.8 H13.4 M4.8 2 V12.4 M9 2 V12.4" stroke="#fff" stroke-width="0.6"/></svg>
<div style="position:absolute;left:695.00px;top:678.00px;font-family:'Liberation Sans',sans-serif;font-size:4.80px;font-weight:normal;color:#e8f1fb;line-height:1;white-space:nowrap;transform-origin:0 0;transform:scaleX(1.0654);">Result</div>
<div style="position:absolute;left:697.20px;top:683.30px;font-family:'Liberation Sans',sans-serif;font-size:4.80px;font-weight:normal;color:#e8f1fb;line-height:1;white-space:nowrap;transform-origin:0 0;transform:scaleX(1.1586);">Grid</div>
<svg style="position:absolute;left:695.50px;top:695.00px;" width="15" height="13" viewBox="0 0 15 13"><rect x="0.5" y="0.5" width="14" height="12" fill="#eaeaea" stroke="#d0d0d0" stroke-width="0.6"/><path d="M2 3 H13 M2 6 H13 M2 9 H10" stroke="#cfcfcf" stroke-width="0.8"/></svg>
<div style="position:absolute;left:697.00px;top:711.30px;font-family:'Liberation Sans',sans-serif;font-size:4.80px;font-weight:normal;color:#999;line-height:1;white-space:nowrap;transform-origin:0 0;transform:scaleX(0.9819);">Form</div>
<div style="position:absolute;left:696.00px;top:716.70px;font-family:'Liberation Sans',sans-serif;font-size:4.80px;font-weight:normal;color:#999;line-height:1;white-space:nowrap;transform-origin:0 0;transform:scaleX(1.0773);">Editor</div>
<svg style="position:absolute;left:697.50px;top:732.00px;" width="11" height="14" viewBox="0 0 11 14"><path d="M1 5 L5.5 0.8 L10 5" stroke="#d2d2d2" stroke-width="1.2" fill="none"/><path d="M1 8.5 L5.5 12.7 L10 8.5" stroke="#d2d2d2" stroke-width="1.2" fill="none"/></svg>
<div style="position:absolute;left:201.50px;top:748.00px;width:486.50px;height:2.20px;background:#fbfbfb;"></div>
<div style="position:absolute;left:246.00px;top:750.00px;width:442.00px;height:9.20px;background:#e6e6e6;"></div>
<div style="position:absolute;left:205.50px;top:751.10px;font-family:'Liberation Sans',sans-serif;font-size:6.00px;font-weight:normal;color:#3a78c0;line-height:1;white-space:nowrap;transform-origin:0 0;transform:scaleX(0.9613);">salesman 7</div>
<div style="position:absolute;left:239.60px;top:750.46px;font-family:'Liberation Sans',sans-serif;font-size:7.00px;font-weight:normal;color:#777;line-height:1;white-space:nowrap;transform-origin:0 0;">×</div>
<div style="position:absolute;left:688.00px;top:750.20px;width:29.50px;height:9.00px;background:#eeeeee;"></div>
<svg style="position:absolute;left:678.80px;top:752.30px;" width="6" height="6" viewBox="0 0 6 6"><circle cx="2.8" cy="2.8" r="2.6" fill="#2e7fd5"/><rect x="2.3" y="1.3" width="1" height="2.2" fill="#fff"/></svg>
<div style="position:absolute;left:689.00px;top:752.26px;font-family:'Liberation Sans',sans-serif;font-size:6.40px;font-weight:normal;color:#222;line-height:1;white-space:nowrap;transform-origin:0 0;transform:scaleX(0.8939);">Read Only</div>
<div style="position:absolute;left:201.50px;top:759.20px;width:516.50px;height:2.80px;background:#f3f3f3;"></div>
</div>
</body></html>
